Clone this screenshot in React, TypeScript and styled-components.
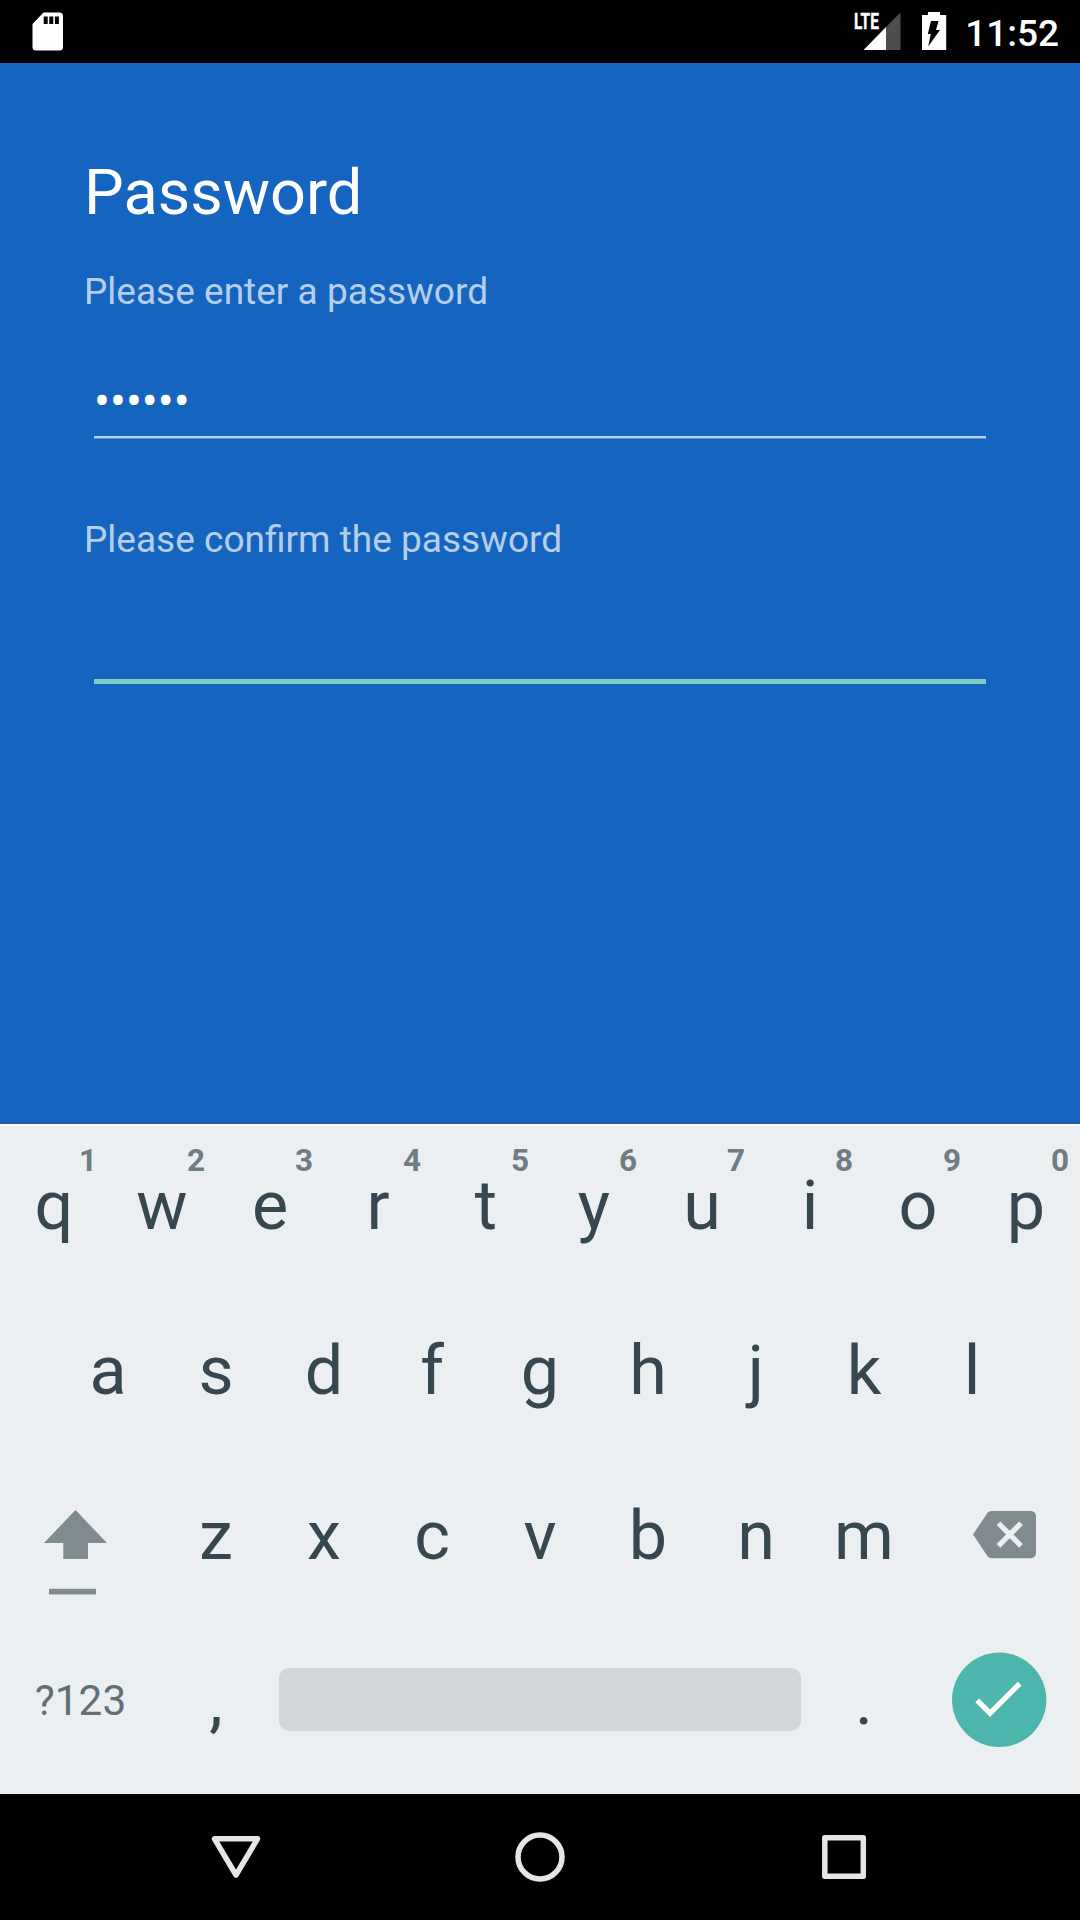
import React from "react";
import styled, { createGlobalStyle } from "styled-components";

const GlobalStyle = createGlobalStyle`
  *, *::before, *::after { box-sizing: border-box; }
  body { margin: 0; background: #000; }
`;

const Screen = styled.div`
  display: flex;
  flex-direction: column;
  width: 1080px;
  height: 1920px;
  overflow: hidden;
  font-family: Roboto, "Noto Sans", sans-serif;
  background: #1565c0;
`;

const StatusBar = styled.header`
  display: flex;
  justify-content: space-between;
  height: 63px;
  padding: 0 21px 0 32px;
  background: #000;
  color: #fff;
`;

const StatusIcons = styled.div`
  display: flex;
`;

const StatusIcon = styled.svg<{ $width: number; $gap?: number }>`
  display: block;
  width: ${(p) => p.$width}px;
  height: 63px;
  margin-right: ${(p) => p.$gap ?? 0}px;
`;

const Signal = styled.div`
  position: relative;
  width: 46px;
  height: 63px;
  margin-right: 21px;
`;

const NetworkType = styled.span`
  position: absolute;
  left: -1px;
  top: 10px;
  font-size: 22px;
  line-height: 24px;
  font-weight: 700;
  transform: scaleX(0.7);
  transform-origin: 0 0;
  -webkit-text-stroke: 0.4px #fff;
`;

const Clock = styled.time`
  width: 94px;
  font-size: 37px;
  line-height: 67px;
  font-weight: 500;
  text-align: right;
  white-space: nowrap;
`;

const Content = styled.main`
  display: flex;
  flex-direction: column;
  height: 1061px;
  padding: 93px 84px 0;
  background: linear-gradient(#1565c0 1052px, #1a60b2);
`;

const Title = styled.h1`
  margin: 0;
  color: #fff;
  font-size: 63px;
  line-height: 74px;
  font-weight: 400;
`;

const Label = styled.label<{ $gap: number }>`
  margin-top: ${(p) => p.$gap}px;
  color: rgba(255, 255, 255, 0.7);
  font-size: 37.03px;
  line-height: 44px;
`;

const Field = styled.div<{ $height: number; $focused?: boolean }>`
  display: flex;
  flex-direction: column;
  justify-content: flex-end;
  height: ${(p) => p.$height}px;
  margin: 0 10px;
  border-bottom: ${(p) => (p.$focused ? "5px solid #80cbc4" : "2px solid #b9d0ec")};
  box-shadow: ${(p) => (p.$focused ? "none" : "0 1px 0 rgba(255, 255, 255, 0.3)")};
`;

const Masked = styled.span`
  color: #fff;
  font-size: 47.25px;
  line-height: 56px;
  margin-bottom: 6px;
`;

const Keyboard = styled.section`
  display: flex;
  flex-direction: column;
  height: 670px;
  background: #ebeff2;
  color: #37474f;
  box-shadow: inset 0 2px 0 #f8fafb;
`;

const KeyRow = styled.div<{ $inset?: number }>`
  display: flex;
  height: 165px;
  padding: 0 ${(p) => p.$inset ?? 0}px;
`;

const Key = styled.div`
  position: relative;
  width: 108px;
  height: 165px;
  font-size: 68.25px;
  line-height: 164px;
  text-align: center;
`;

const Hint = styled.span`
  position: absolute;
  top: 19px;
  left: 68px;
  width: 40px;
  color: #6f7c81;
  font-size: 31.5px;
  line-height: 36px;
  font-weight: 700;
  text-align: center;
`;

const WideKey = styled.div`
  display: flex;
  width: 162px;
  height: 165px;
`;

const KeyIcon = styled.svg`
  display: block;
  width: 162px;
  height: 165px;
`;

const ModeKey = styled(WideKey)`
  justify-content: center;
  padding-right: 1px;
  color: #5f6f75;
  font-size: 42.3px;
  line-height: 163px;
`;

const SpaceCell = styled.div`
  display: flex;
  justify-content: center;
  width: 540px;
  height: 165px;
  padding-top: 49px;
`;

const SpaceBar = styled.div`
  width: 522px;
  height: 63px;
  border-radius: 10px;
  background: #d1d6d9;
`;

const NavBar = styled.nav`
  display: flex;
  justify-content: center;
  gap: 178px;
  height: 126px;
  background: #000;
`;

const NavIcon = styled.svg`
  display: block;
  width: 126px;
  height: 126px;
  fill: none;
  stroke: #e6e6e6;
  stroke-linejoin: round;
`;

const topRow = ["q", "w", "e", "r", "t", "y", "u", "i", "o", "p"];
const middleRow = ["a", "s", "d", "f", "g", "h", "j", "k", "l"];
const bottomRow = ["z", "x", "c", "v", "b", "n", "m"];

export default function App() {
  return (
    <>
      <GlobalStyle />
      <Screen>
        <StatusBar>
          <StatusIcon $width={31} viewBox="0 0 31 63">
            <path
              fill="#fff"
              fillRule="evenodd"
              d="M11.5 12.5H27.5a3.5 3.5 0 0 1 3.5 3.5V47a3.5 3.5 0 0 1-3.5 3.5H4A3.5 3.5 0 0 1 .5 47V24ZM11.7 16.5V24h4V16.5ZM17.3 16.5V24h4V16.5ZM22.9 16.5V24h4V16.5Z"
            />
          </StatusIcon>
          <StatusIcons>
            <Signal>
              <StatusIcon $width={46} viewBox="0 0 46 63">
                <path fill="#4d4d4d" d="M45.5 12.5V50H31V27Z" />
                <path fill="#fff" d="M31 27V50H8.5Z" />
              </StatusIcon>
              <NetworkType>LTE</NetworkType>
            </Signal>
            <StatusIcon $width={25} $gap={18} viewBox="0 0 25 63">
              <path fill="#fff" d="M6 12h12v3H24.2V50H0V15h6Z" />
              <path fill="#000" d="M9 21h7.5l-2.5 9h4L6.2 46.5l2.6-12.5H5.8Z" />
            </StatusIcon>
            <Clock>11:52</Clock>
          </StatusIcons>
        </StatusBar>

        <Content>
          <Title>Password</Title>
          <Label $gap={40}>Please enter a password</Label>
          <Field $height={124}>
            <Masked>••••••</Masked>
          </Field>
          <Label $gap={80}>Please confirm the password</Label>
          <Field $height={122} $focused />
        </Content>

        <Keyboard>
          <KeyRow>
            {topRow.map((letter, i) => (
              <Key key={letter}>
                {letter}
                <Hint>{(i + 1) % 10}</Hint>
              </Key>
            ))}
          </KeyRow>
          <KeyRow $inset={54}>
            {middleRow.map((letter) => (
              <Key key={letter}>{letter}</Key>
            ))}
          </KeyRow>
          <KeyRow>
            <WideKey>
              <KeyIcon viewBox="0 0 162 165" fill="#808b8f">
                <path d="M75.5 56 107 89H88v16H63.3V89H44Z" />
                <rect x="49" y="134.8" width="47" height="5.6" />
              </KeyIcon>
            </WideKey>
            {bottomRow.map((letter) => (
              <Key key={letter}>{letter}</Key>
            ))}
            <WideKey>
              <KeyIcon viewBox="0 0 162 165" fill="#808b8f">
                <path
                  transform="translate(55 49) scale(2.625)"
                  d="M22 3H7c-.69 0-1.23.35-1.59.88L0 12l5.41 8.11c.36.53.9.89 1.59.89h15c1.1 0 2-.9 2-2V5c0-1.1-.9-2-2-2zm-3 12.59L17.59 17 14 13.41 10.41 17 9 15.59 12.59 12 9 8.41 10.41 7 14 10.59 17.59 7 19 8.41 15.41 12 19 15.59z"
                />
              </KeyIcon>
            </WideKey>
          </KeyRow>
          <KeyRow>
            <ModeKey>?123</ModeKey>
            <Key>,</Key>
            <SpaceCell>
              <SpaceBar />
            </SpaceCell>
            <Key>.</Key>
            <WideKey>
              <KeyIcon viewBox="0 0 162 165">
                <circle cx="81.2" cy="80.8" r="47.2" fill="#4db6ac" />
                <path
                  fill="#fff"
                  transform="translate(48.4 48) scale(2.625)"
                  d="M9 16.17L4.83 12l-1.42 1.41L9 19 21 7l-1.41-1.41z"
                />
              </KeyIcon>
            </WideKey>
          </KeyRow>
        </Keyboard>

        <NavBar>
          <NavIcon viewBox="0 0 126 126" strokeWidth="5.5">
            <path d="M41.5 44.8H84.5L63 81Z" />
          </NavIcon>
          <NavIcon viewBox="0 0 126 126" strokeWidth="5.5">
            <circle cx="63" cy="63" r="22" />
          </NavIcon>
          <NavIcon viewBox="0 0 126 126" strokeWidth="5.5">
            <rect x="43.8" y="43.8" width="38.5" height="38.5" />
          </NavIcon>
        </NavBar>
      </Screen>
    </>
  );
}
